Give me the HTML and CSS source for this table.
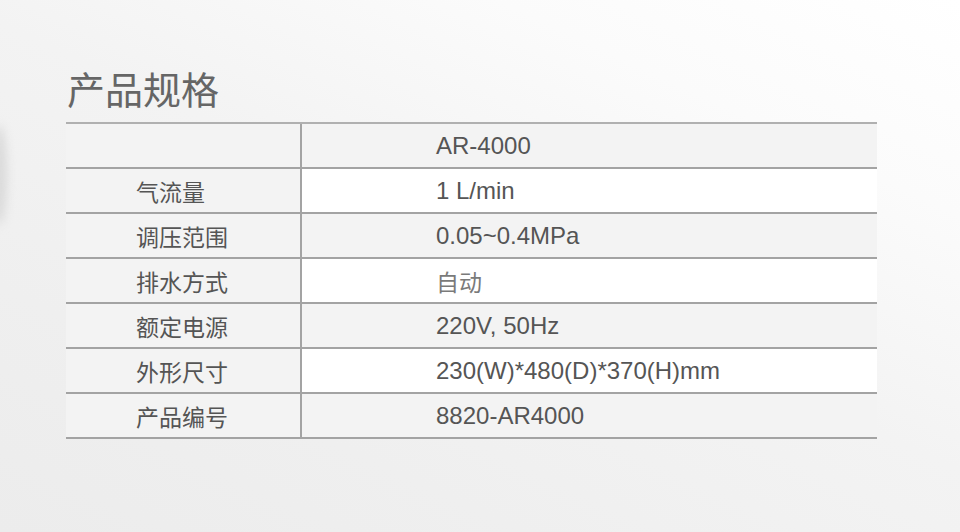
FILE: index.html
```html
<!DOCTYPE html>
<html lang="zh">
<head>
<meta charset="utf-8">
<title>产品规格</title>
<link rel="stylesheet" href="styles.css">
</head>
<body>
<div class="edge-shade"></div>
<main class="page">
  <h1 class="title">产品规格</h1>
  <div class="spec">
    <div class="row alt"><div class="label"></div><div class="value">AR-4000</div></div>
    <div class="row"><div class="label">气流量</div><div class="value">1 L/min</div></div>
    <div class="row alt"><div class="label">调压范围</div><div class="value">0.05~0.4MPa</div></div>
    <div class="row"><div class="label">排水方式</div><div class="value light">自动</div></div>
    <div class="row alt"><div class="label">额定电源</div><div class="value">220V, 50Hz</div></div>
    <div class="row"><div class="label">外形尺寸</div><div class="value">230(W)*480(D)*370(H)mm</div></div>
    <div class="row alt"><div class="label">产品编号</div><div class="value">8820-AR4000</div></div>
  </div>
</main>
</body>
</html>
```
FILE: styles.css
```css
html, body {
  margin: 0;
  padding: 0;
  width: 960px;
  height: 532px;
  overflow: hidden;
}
body {
  position: relative;
  background: linear-gradient(205deg, #ffffff 0%, #fbfbfb 22%, #f3f3f3 48%, #efefef 75%, #ececec 100%);
  font-family: "Liberation Sans", Arial, "Noto Sans CJK SC", sans-serif;
  color: #575757;
}
.edge-shade {
  position: absolute;
  left: -9px;
  top: 125px;
  width: 16px;
  height: 100px;
  border-radius: 50%;
  background: #dadada;
  filter: blur(5px);
}
.page {
  display: flex;
  flex-direction: column;
  padding: 69px 0 0 66px;
}
.title {
  margin: 0 0 15px 0;
  font-family: "Noto Sans CJK SC", sans-serif;
  font-weight: 400;
  font-size: 38px;
  line-height: 38px;
  color: #666666;
  padding-left: 1px;
}
.spec {
  width: 811px;
  border-top: 2px solid #b0b0b0;
}
.row {
  display: grid;
  grid-template-columns: 236px 575px;
  height: 45px;
  box-sizing: border-box;
  border-bottom: 2px solid #a3a3a3;
  background: #ffffff;
}
.row.alt {
  background: #f3f3f3;
}
.label {
  background: #f3f3f3;
  border-right: 2px solid #a3a3a3;
  padding-left: 70px;
  display: flex;
  align-items: center;
  font-family: "Noto Sans CJK SC", sans-serif;
  font-size: 23px;
  color: #555555;
}
.value {
  padding-left: 134px;
  display: flex;
  align-items: center;
  font-size: 24px;
  color: #555555;
}
.value.light {
  font-family: "Noto Sans CJK SC", sans-serif;
  font-size: 23px;
  color: #7a7a7a;
}
```
